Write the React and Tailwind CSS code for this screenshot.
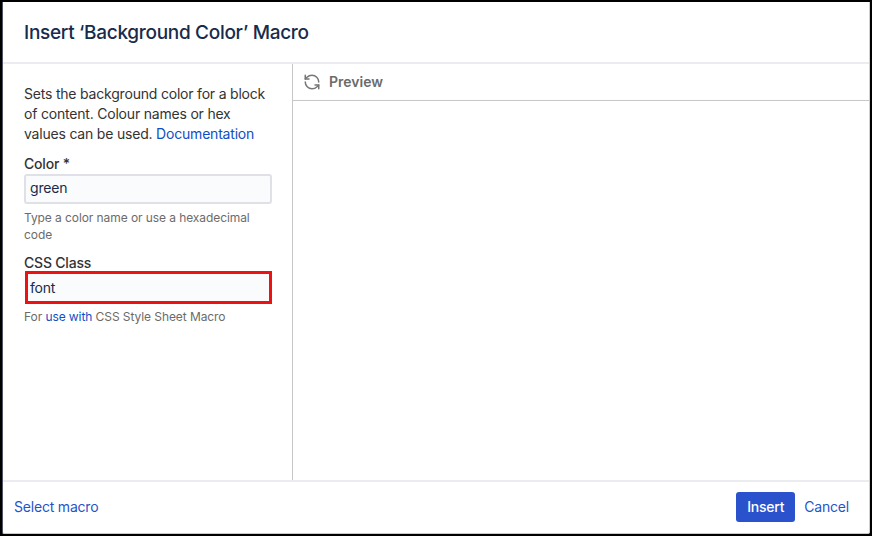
import React from "react";
import { RefreshCcw } from "lucide-react";

export default function App() {
  return (
    <div className="w-[872px] h-[536px] bg-black pt-[2px] pl-[2px] pr-[2px] pb-[2px] font-['Inter','Liberation_Sans',sans-serif] text-[14px] leading-[20px] tracking-[-0.2px] text-[#333333]">
      <div className="flex h-full flex-col rounded-b-[2px] border-b border-l border-r border-b-[#c9c9c9] border-l-[#4d5566] border-r-[#cfcfcf] bg-white">
        <header className="flex h-[62px] shrink-0 items-center border-b-2 border-[#ebecf0] pl-[21px] pt-px">
          <h1 className="text-[19px] font-medium leading-[24px] tracking-[-0.3px] text-[#172b4d]">Insert ‘Background Color’ Macro</h1>
        </header>
        <main className="flex min-h-0 flex-1">
          <section className="w-[290px] shrink-0 border-r border-[#c7c7c7] pl-[21px] pr-[18px] pt-5">
            <p>
              Sets the background color for a block of content. Colour names or hex values can be used.{" "}
              <a className="text-[#0f4fc4]">Documentation</a>
            </p>
            <div className="mt-[10px] font-medium leading-[20px]">Color *</div>
            <input
              readOnly
              value="green"
              className="block h-[30px] w-[248px] rounded-[3px] border-2 border-[#dfe1e6] bg-[#fafbfc] pl-1 pb-[3px] text-[14px] text-[#172b4d] outline-none"
            />
            <p className="mt-[5px] text-[12px] leading-[17px] tracking-[-0.08px] text-[#6b6b6b]">Type a color name or use a hexadecimal code</p>
            <div className="mt-[11px] font-medium leading-[17px]">CSS Class</div>
            <input
              readOnly
              value="font"
              className="block h-[33px] w-[247px] ml-px border-[3px] border-[#ed1212] bg-[#fafbfc] pl-[2px] text-[14px] text-[#172b4d] outline-none"
            />
            <p className="mt-[4px] text-[12px] leading-[17px] tracking-[-0.08px] text-[#6b6b6b]">
              For <a className="text-[#0f4fc4]">use with</a> CSS Style Sheet Macro
            </p>
          </section>
          <section className="flex min-w-0 flex-1 flex-col">
            <div className="flex h-[37px] shrink-0 items-center gap-[8px] border-b border-[#c7c7c7] pl-[10px]">
              <RefreshCcw size={18} strokeWidth={2} color="#777777" />
              <span className="font-semibold tracking-normal text-[#6b6b6b]">Preview</span>
            </div>
          </section>
        </main>
        <footer className="flex h-[53px] shrink-0 items-center justify-between border-t-2 border-[#ebecf0] pb-[2px] pl-[11px] pr-[20px]">
          <a className="text-[#1f55c9]">Select macro</a>
          <div className="flex items-center gap-[9px]">
            <button className="h-[30px] w-[59px] rounded-[3px] bg-[#2952cc] text-[14px] font-medium text-white">Insert</button>
            <a className="text-[#1f55c9]">Cancel</a>
          </div>
        </footer>
      </div>
    </div>
  );
}
